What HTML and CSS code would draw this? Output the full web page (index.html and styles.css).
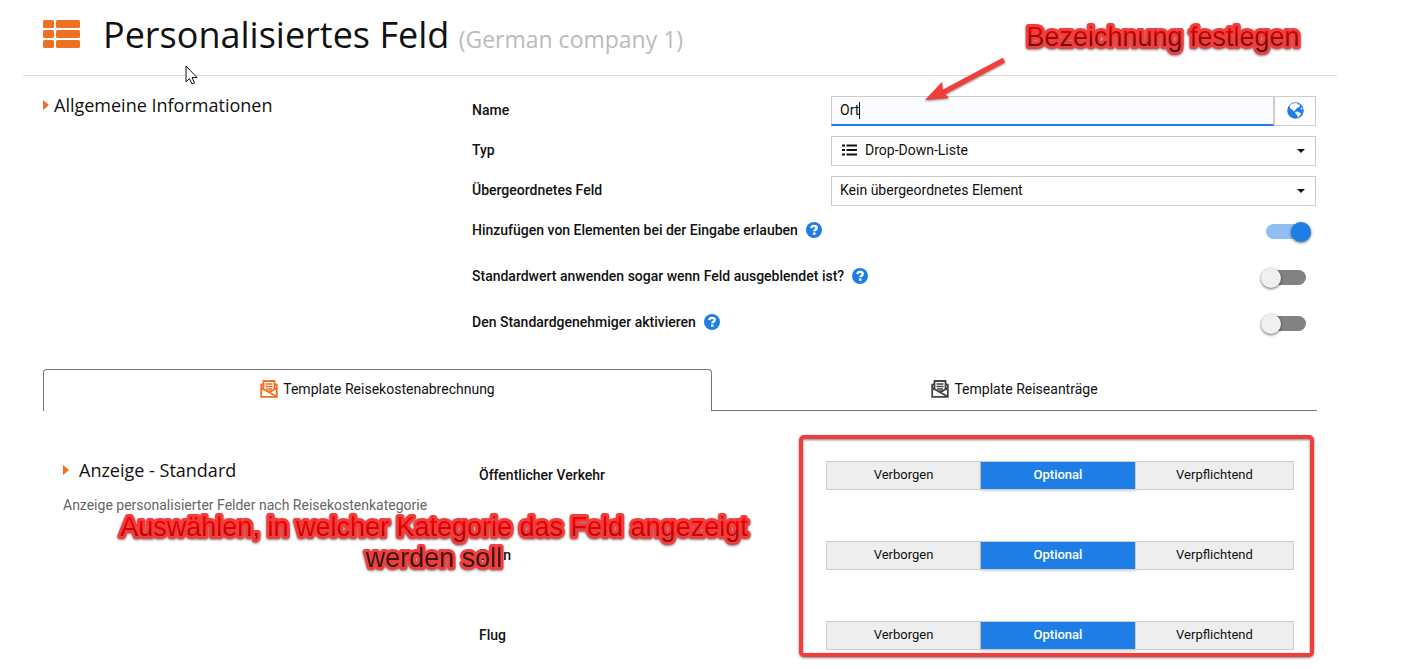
FILE: index.html
```html
<!DOCTYPE html>
<html lang="de">
<head>
    <meta charset="UTF-8">
    <meta name="viewport" content="width=device-width, initial-scale=1.0">
    <title>Personalisiertes Feld</title>
    <link rel="stylesheet" href="styles.css">
</head>
<body>
    <svg class="sprite" aria-hidden="true">
      <symbol id="icon-help" viewBox="0 0 16 16">
        <circle cx="8" cy="8" r="8" fill="#1f7ee6"/>
        <path d="M5.300 6.200C5.500 4.600 6.600 3.900 8.100 3.900c1.600 0 2.600.8 2.600 2 0 1.800-2.400 1.700-2.400 3.400" fill="none" stroke="#fff" stroke-width="2.400"/>
        <rect x="7" y="10.400" width="2.500" height="2.400" fill="#fff"/>
      </symbol>
      <symbol id="icon-template" viewBox="0 0 18 18">
        <path d="M3.500 9V1h11v8M1.200 4v12.800h15.600V4M1 4.500h2.500M14.500 4.500H17M1.500 8l15 8.500M16.500 8l-6.500 4" fill="none" stroke="currentColor" stroke-width="1.800"/>
        <path d="M5.500 4h7M5.500 6.500h7M6 9h6M8 11h3" fill="none" stroke="currentColor" stroke-width="1.300"/>
      </symbol>
    </svg>

    <div class="page">
      <header class="page-header">
        <svg class="header-icon" viewBox="0 0 37 29" fill="#f07023" aria-hidden="true">
          <rect x="0" y="0" width="11" height="8" rx="1.500"/>
          <rect x="13" y="0" width="24" height="8" rx="1.500"/>
          <rect x="0" y="10" width="11" height="8" rx="1.500"/>
          <rect x="13" y="10" width="24" height="8" rx="1.500"/>
          <rect x="0" y="20" width="11" height="8" rx="1.500"/>
          <rect x="13" y="20" width="24" height="8" rx="1.500"/>
        </svg>
        <h1>Personalisiertes Feld <small>(German company 1)</small></h1>
      </header>

      <main>
        <section class="general">
          <h2>Allgemeine Informationen</h2>
          <div class="rows">
            <div class="row">
              <label for="fieldName">Name</label>
              <div class="input-group">
                <div class="name-box">
                  <input type="text" id="fieldName" value="Ort">
                  <span class="caret"></span>
                </div>
                <button type="button" class="globe" aria-label="Übersetzungen">
                  <svg width="17" height="17" viewBox="0 0 17 17">
                    <circle cx="8.500" cy="8.500" r="8.300" fill="#1f7ee6"/>
                    <path d="M2.500 3.500 5 1.800 8 1l3 .4-.5 1.300 1.700-.4.900 1.400-1.400 1.900-1.900.4-.8 1.700-1.600.5.500 1.300-1.400-.3L5 7.500 3.200 6.200z" fill="#fff"/>
                    <path d="m8.200 10 2.500-.4 2.300 1.500 1.300.3-1.800 2.500-2 1.300-.3-2.200L8.600 12z" fill="#fff"/>
                    <path d="m14.200 4.800 1.100 2-.1 1.300-1.300-1.200z" fill="#fff"/>
                  </svg>
                </button>
              </div>
            </div>
            <div class="row">
              <label for="fieldType">Typ</label>
              <div class="select-box with-icon">
                <svg class="list-icon" viewBox="0 0 15 12" aria-hidden="true">
                  <path d="M0 1.500h3M0 6h3M0 10.500h3M4.500 1.500H15M4.500 6H15M4.500 10.500H15" stroke="#111" stroke-width="2.200"/>
                </svg>
                <select id="fieldType"><option>Drop-Down-Liste</option></select>
              </div>
            </div>
            <div class="row">
              <label for="fieldParent">Übergeordnetes Feld</label>
              <div class="select-box">
                <select id="fieldParent"><option>Kein übergeordnetes Element</option></select>
              </div>
            </div>
            <div class="row switch-row">
              <label for="allowAdd">Hinzufügen von Elementen bei der Eingabe erlauben <svg class="help"><use href="#icon-help"/></svg></label>
              <input type="checkbox" class="switch" id="allowAdd" checked>
            </div>
            <div class="row switch-row">
              <label for="applyDefault">Standardwert anwenden sogar wenn Feld ausgeblendet ist? <svg class="help"><use href="#icon-help"/></svg></label>
              <input type="checkbox" class="switch" id="applyDefault">
            </div>
            <div class="row switch-row">
              <label for="defaultApprover">Den Standardgenehmiger aktivieren <svg class="help"><use href="#icon-help"/></svg></label>
              <input type="checkbox" class="switch" id="defaultApprover">
            </div>
          </div>
        </section>

        <div class="tabs" role="tablist">
          <button type="button" role="tab" class="tab active" aria-selected="true">
            <svg class="tab-icon"><use href="#icon-template"/></svg>Template Reisekostenabrechnung
          </button>
          <button type="button" role="tab" class="tab" aria-selected="false">
            <svg class="tab-icon"><use href="#icon-template"/></svg>Template Reiseanträge
          </button>
        </div>

        <section class="display">
          <div class="display-info">
            <h2>Anzeige - Standard</h2>
            <p>Anzeige personalisierter Felder nach Reisekostenkategorie</p>
          </div>
          <div class="display-rows">
            <div class="display-row">
              <span id="catTransit" class="category">Öffentlicher Verkehr</span>
              <div class="segmented" role="group" aria-labelledby="catTransit">
                <button type="button">Verborgen</button>
                <button type="button" class="selected">Optional</button>
                <button type="button">Verpflichtend</button>
              </div>
            </div>
            <div class="display-row">
              <span id="catTrain" class="category">Bahn</span>
              <div class="segmented" role="group" aria-labelledby="catTrain">
                <button type="button">Verborgen</button>
                <button type="button" class="selected">Optional</button>
                <button type="button">Verpflichtend</button>
              </div>
            </div>
            <div class="display-row">
              <span id="catFlight" class="category">Flug</span>
              <div class="segmented" role="group" aria-labelledby="catFlight">
                <button type="button">Verborgen</button>
                <button type="button" class="selected">Optional</button>
                <button type="button">Verpflichtend</button>
              </div>
            </div>
          </div>
        </section>
      </main>
    </div>

    <!-- Annotations on top of the form -->
    <svg class="note note-name" width="300" height="50" viewBox="0 0 300 50">
      <defs>
        <linearGradient id="noteFill" gradientUnits="userSpaceOnUse" x1="0" y1="14" x2="0" y2="42">
          <stop offset="0" stop-color="#f80000"/>
          <stop offset="1" stop-color="#2a1818"/>
        </linearGradient>
      </defs>
      <text x="150" y="35" fill="url(#noteFill)">Bezeichnung festlegen</text>
    </svg>
    <svg class="note note-arrow" width="90" height="50" viewBox="0 0 90 50" aria-hidden="true">
      <path d="M84 6 22 39" stroke="#f33c3c" stroke-width="5"/>
      <path d="m5 46 17-18 1 10 6 6z" fill="#f33c3c"/>
    </svg>
    <svg class="note note-category" width="660" height="70" viewBox="0 0 660 70">
      <defs>
        <linearGradient id="noteFillTall" gradientUnits="userSpaceOnUse" x1="0" y1="10" x2="0" y2="64">
          <stop offset="0" stop-color="#f80000"/>
          <stop offset=".15" stop-color="#f00000"/>
          <stop offset=".4" stop-color="#a80808"/>
          <stop offset=".65" stop-color="#3c1818"/>
          <stop offset="1" stop-color="#2a1c1c"/>
        </linearGradient>
      </defs>
      <text fill="url(#noteFillTall)"><tspan x="331" y="31">Auswählen, in welcher Kategorie das Feld angezeigt</tspan><tspan x="331" y="62">werden soll</tspan></text>
    </svg>
    <div class="note note-frame"></div>
    <svg class="note pointer" width="14" height="21" viewBox="0 0 14 21" aria-hidden="true">
      <path d="M1 1v16l3.500-3.500L7 19l2.500-1-2.400-5.500H12z" fill="#fff" stroke="#111" stroke-width="1"/>
    </svg>
</body>
</html>
```
FILE: styles.css
```css
* {
  box-sizing: border-box;
}

body {
  margin: 0;
  min-height: 100vh;
  position: relative;
  background: #fff;
  color: #111;
  font-family: Roboto, sans-serif;
  font-size: 14px;
}

button, input, select {
  font-family: inherit;
  font-size: 14px;
  color: inherit;
}

.sprite {
  display: none;
}

.page {
  margin: 0 74px 0 23px;
}

.page-header {
  display: flex;
  align-items: center;
  gap: 23px;
  padding: 0 20px;
  height: 76px;
  border-bottom: 1px solid #ddd;
}

.header-icon {
  width: 37px;
  height: 29px;
  margin-bottom: 6px;
}

h1 {
  margin: 0 0 2px;
  font-family: "Open Sans", sans-serif;
  font-size: 36px;
  font-weight: 400;
  line-height: 50px;
}

h1 small {
  font-size: 23px;
  color: #bbb;
}

h2 {
  display: flex;
  align-items: center;
  gap: 5px;
  margin: 0;
  font-family: "Open Sans", sans-serif;
  font-size: 18px;
  font-weight: 400;
  line-height: 18px;
}

h2::before {
  content: "";
  border: 5px solid transparent;
  border-left: 6px solid #f07023;
  border-right: 0;
}

main {
  padding: 20px 20px 0;
}

/* General information */
.general {
  display: grid;
  grid-template-columns: 429fr 845fr;
  align-items: start;
}

.rows {
  display: flex;
  flex-direction: column;
  gap: 10px;
}

.row {
  display: grid;
  grid-template-columns: 359fr 485fr;
  align-items: start;
  padding-right: 1px;
}

.row label {
  display: flex;
  align-items: center;
  gap: 8px;
  height: 28px;
  font-weight: 500;
  white-space: nowrap;
}

.help {
  width: 16px;
  height: 16px;
}

.input-group {
  display: flex;
}

.name-box {
  position: relative;
  flex: 1;
}

.name-box input {
  width: 100%;
  height: 30px;
  padding: 0 8px 2px;
  border: 1px solid #ccc;
  border-bottom: 2px solid #1f7ee6;
  background: #fafcff;
  outline: none;
}

.caret {
  position: absolute;
  left: 28px;
  top: 6px;
  width: 1px;
  height: 17px;
  background: #000;
}

.globe {
  display: flex;
  align-items: center;
  justify-content: center;
  width: 42px;
  height: 30px;
  padding: 0 0 2px;
  border: 1px solid #ccc;
  background: #fff;
}

.select-box {
  position: relative;
}

.select-box::after {
  content: "";
  position: absolute;
  right: 11px;
  top: 13px;
  border: 4px solid transparent;
  border-top-color: #111;
  border-bottom: 0;
}

.select-box select {
  width: 100%;
  height: 30px;
  padding: 0 30px 2px 8px;
  border: 1px solid #ccc;
  border-radius: 0;
  background: #fff;
  appearance: none;
}

.with-icon select {
  padding-left: 33px;
}

.list-icon {
  position: absolute;
  left: 11px;
  top: 8px;
  width: 15px;
  height: 12px;
}

.switch-row {
  min-height: 36px;
}

.switch {
  position: relative;
  justify-self: end;
  width: 40px;
  height: 15px;
  margin: 8px 10px 0 0;
  border-radius: 8px;
  background: #828282;
  appearance: none;
}

.switch::before {
  content: "";
  position: absolute;
  left: -5px;
  top: -2px;
  width: 20px;
  height: 20px;
  border-radius: 50%;
  background: #f0f0f0;
  box-shadow: 0 1px 3px rgba(0, 0, 0, 0.6);
}

.switch:checked {
  background: #8fbff3;
}

.switch:checked::before {
  left: 25px;
  background: #1f7ee6;
}

/* Template tabs */
.tabs {
  display: grid;
  grid-template-columns: 669fr 605fr;
  margin-top: 25px;
}

.tab {
  display: flex;
  align-items: center;
  justify-content: center;
  gap: 5px;
  height: 42px;
  padding: 0 0 2px;
  border: 0;
  border-bottom: 1px solid #777;
  background: #fff;
}

.tab.active {
  padding-bottom: 4px;
  border: 1px solid #777;
  border-bottom: 0;
  border-radius: 4px 4px 0 0;
}

.tab-icon {
  width: 18px;
  height: 18px;
  color: #444;
}

.active .tab-icon {
  color: #f07023;
}

/* Display per category */
.display {
  display: grid;
  grid-template-columns: 416fr 815fr;
  padding: 50px 23px 0 20px;
}

.display h2 {
  gap: 10px;
}

.display-info p {
  margin: 18px 0 0;
  line-height: 16px;
  color: #666;
}

.display-rows {
  display: flex;
  flex-direction: column;
  gap: 51px;
}

.display-row {
  display: grid;
  grid-template-columns: 347fr 468fr;
  align-items: center;
}

.category {
  padding-bottom: 2px;
  font-weight: 500;
}

.segmented {
  display: grid;
  grid-template-columns: 155fr 155fr 158fr;
}

.segmented button {
  height: 29px;
  padding: 0 0 2px;
  border: 1px solid #ccc;
  border-left: 0;
  background: #eee;
  font-size: 13px;
}

.segmented button:first-child {
  border-left: 1px solid #ccc;
}

.segmented .selected {
  background: #1f7ee6;
  color: #fff;
  font-weight: 500;
  box-shadow: 0 1px 3px rgba(0, 0, 0, 0.2);
}

/* Annotations */
.note {
  position: absolute;
  pointer-events: none;
  filter: drop-shadow(0 1px 1px rgba(0, 0, 0, 0.5));
}

.note text {
  font-family: "Liberation Sans", sans-serif;
  font-size: 27px;
  text-anchor: middle;
  stroke: #f33c3c;
  stroke-width: 6px;
  stroke-linejoin: round;
  paint-order: stroke;
}

.note-name {
  left: 1013px;
  top: 11px;
}

.note-arrow {
  left: 920px;
  top: 54px;
}

.note-category {
  left: 103px;
  top: 505px;
}

.note-frame {
  left: 799px;
  right: 97px;
  top: 435px;
  height: 222px;
  border: 4px solid #f33c3c;
  border-radius: 5px;
}

.pointer {
  left: 185px;
  top: 65px;
  filter: none;
}
```
